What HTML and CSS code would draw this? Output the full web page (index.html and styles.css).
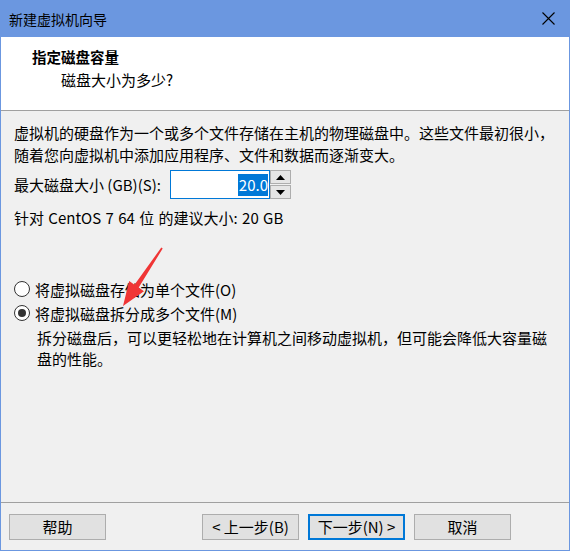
FILE: index.html
```html
<!DOCTYPE html>
<html lang="zh-CN">
<head>
<meta charset="utf-8">
<link rel="stylesheet" href="styles.css">
</head>
<body>
<div class="window">
  <div class="titlebar">
    <span class="title">新建虚拟机向导</span>
    <svg class="close" width="13" height="13" viewBox="0 0 13 13"><path d="M0.5 0.5 L12.5 12.5 M12.5 0.5 L0.5 12.5" stroke="#000" stroke-width="1.1" fill="none"/></svg>
  </div>
  <div class="header">
    <div class="h-title">指定磁盘容量</div>
    <div class="h-sub">磁盘大小为多少?</div>
  </div>
  <div class="content">
    <p class="intro">虚拟机的硬盘作为一个或多个文件存储在主机的物理磁盘中。这些文件最初很小，<br>随着您向虚拟机中添加应用程序、文件和数据而逐渐变大。</p>
    <div class="size-row">
      <span class="size-label">最大磁盘大小 (GB)(S):</span>
      <div class="field"><span class="sel">20.0</span></div>
      <div class="spin">
        <div class="sb"><svg width="9" height="5" viewBox="0 0 9 5"><path d="M0 5 L4.5 0 L9 5 Z" fill="#000"/></svg></div>
        <div class="sb"><svg width="9" height="5" viewBox="0 0 9 5"><path d="M0 0 L4.5 5 L9 0 Z" fill="#000"/></svg></div>
      </div>
    </div>
    <div class="hint">针对 CentOS 7 64 位 的建议大小: 20 GB</div>
    <div class="radios">
      <div class="radio-row"><span class="radio"></span><span>将虚拟磁盘存储为单个文件(O)</span></div>
      <div class="radio-row"><span class="radio checked"></span><span>将虚拟磁盘拆分成多个文件(M)</span></div>
      <p class="desc">拆分磁盘后，可以更轻松地在计算机之间移动虚拟机，但可能会降低大容量磁<br>盘的性能。</p>
    </div>
  </div>
  <div class="footer">
    <button class="btn">帮助</button>
    <div class="spacer"></div>
    <button class="btn">&lt; 上一步(B)</button>
    <button class="btn primary">下一步(N) &gt;</button>
    <button class="btn">取消</button>
  </div>
  <svg class="arrow" width="570" height="551" viewBox="0 0 570 551">
    <polygon points="161.3,247.5 162.7,248.5 138.7,287.6 144,291.3 123,306 129.2,281.1 134.5,284.8" fill="#f03535"/>
  </svg>
</div>
</body>
</html>
```

FILE: styles.css
```css
* { box-sizing: border-box; }
html, body { margin: 0; padding: 0; background: #f0f0f0; }
body {
  font-family: "Segoe UI", "Noto Sans CJK SC", "Noto Sans", sans-serif;
  font-size: 15px;
  color: #000;
}
.window {
  position: relative;
  width: 570px;
  height: 551px;
  display: flex;
  flex-direction: column;
  border: 1px solid #6b97e0;
  border-top: 0;
  background: #f0f0f0;
}
.titlebar {
  height: 37px;
  margin: 0 -1px;
  background: #6b97e0;
  display: flex;
  align-items: center;
  justify-content: space-between;
  padding: 0 15px 0 9px;
  font-size: 14px;
}
.title { line-height: 20px; }
.close { display: block; }
.header {
  height: 74px;
  background: #fff;
  border-bottom: 1px solid #a0a0a0;
  padding-top: 10px;
}
.h-title {
  padding-left: 31px;
  font-weight: bold;
  font-size: 14.5px;
  line-height: 20px;
}
.h-sub {
  padding-left: 60px;
  line-height: 26px;
}
.content {
  flex: 1;
  padding: 11px 0 0 13px;
}
.intro {
  margin: 0;
  line-height: 22px;
}
.size-row {
  margin-top: 4px;
  display: flex;
  align-items: center;
  height: 29px;
}
.size-label { width: 156px; }
.field {
  width: 100px;
  height: 29px;
  border: 1px solid #0078d7;
  background: #fff;
  display: flex;
  align-items: center;
  justify-content: flex-end;
  padding-right: 1px;
}
.sel {
  background: #0078d7;
  color: #fff;
  line-height: 22px;
  padding: 0 0 0 1px;
}
.spin {
  display: flex;
  flex-direction: column;
  gap: 1px;
  height: 29px;
}
.sb {
  width: 21px;
  height: 14px;
  border: 1px solid #adadad;
  background: #e5e5e5;
  display: flex;
  align-items: center;
  justify-content: center;
}
.sb svg { display: block; }
.hint {
  margin-top: 8px;
  line-height: 22px;
  word-spacing: 1px;
}
.radios { margin-top: 48px; }
.radio-row {
  display: flex;
  align-items: center;
  height: 24px;
  gap: 5px;
}
.radio {
  width: 16px;
  height: 16px;
  border: 1px solid #333;
  border-radius: 50%;
  background: #fff;
  display: flex;
  align-items: center;
  justify-content: center;
}
.radio.checked::after {
  content: "";
  width: 8px;
  height: 8px;
  border-radius: 50%;
  background: #333;
}
.desc {
  margin: 2px 0 0 23px;
  line-height: 21px;
}
.footer {
  height: 48px;
  border-top: 1px solid #a0a0a0;
  padding: 11px 0 0 8px;
  display: flex;
  align-items: flex-start;
  gap: 9px;
}
.spacer { width: 78px; }
.btn {
  width: 97px;
  height: 26px;
  border: 1px solid #adadad;
  background: #e1e1e1;
  font-family: inherit;
  font-size: 15px;
  color: #000;
  padding: 0;
  line-height: 22px;
}
.btn.primary {
  border: 2px solid #0078d7;
}
.arrow {
  position: absolute;
  left: -1px;
  top: 0;
  pointer-events: none;
}
```
